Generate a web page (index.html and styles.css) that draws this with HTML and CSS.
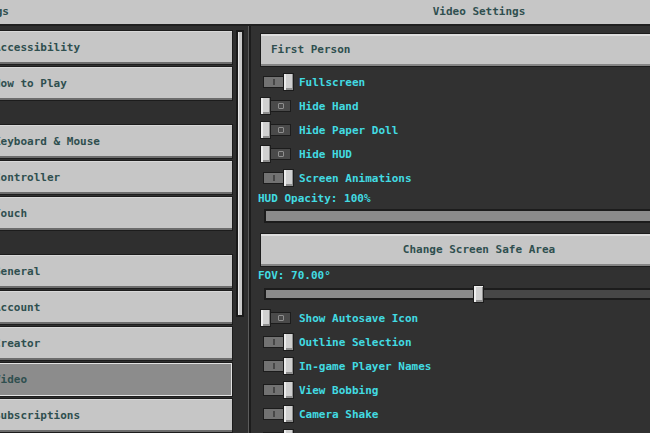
FILE: index.html
```html
<!DOCTYPE html>
<html lang="en">
<head>
    <meta charset="UTF-8">
    <meta name="viewport" content="width=device-width, initial-scale=1.0">
    <title>Video Settings</title>
    <link rel="stylesheet" href="styles.css">
</head>
<body>

    <div class="screen">
        <header class="topbar">
            <div class="topbar-left">Settings</div>
            <div class="topbar-right">Video Settings</div>
        </header>

        <div class="main">
            <nav class="sidebar">
                <div class="sidebar-list">
                    <div class="nav-group">
                        <div class="nav-button">Accessibility</div>
                        <div class="nav-button">How to Play</div>
                    </div>
                    <div class="nav-group">
                        <div class="nav-button">Keyboard &amp; Mouse</div>
                        <div class="nav-button">Controller</div>
                        <div class="nav-button">Touch</div>
                    </div>
                    <div class="nav-group">
                        <div class="nav-button">General</div>
                        <div class="nav-button">Account</div>
                        <div class="nav-button">Creator</div>
                        <div class="nav-button selected">Video</div>
                        <div class="nav-button">Subscriptions</div>
                    </div>
                </div>
                <div class="scrollbar"></div>
            </nav>

            <section class="content">
                <div class="mc-button">First Person</div>

                <div class="setting-list first">
                    <div class="setting">
                        <span class="toggle is-on"><span class="toggle-track"></span><span class="toggle-knob"></span></span>
                        <span class="setting-label">Fullscreen</span>
                    </div>
                    <div class="setting">
                        <span class="toggle"><span class="toggle-track"></span><span class="toggle-knob"></span></span>
                        <span class="setting-label">Hide Hand</span>
                    </div>
                    <div class="setting">
                        <span class="toggle"><span class="toggle-track"></span><span class="toggle-knob"></span></span>
                        <span class="setting-label">Hide Paper Doll</span>
                    </div>
                    <div class="setting">
                        <span class="toggle"><span class="toggle-track"></span><span class="toggle-knob"></span></span>
                        <span class="setting-label">Hide HUD</span>
                    </div>
                    <div class="setting">
                        <span class="toggle is-on"><span class="toggle-track"></span><span class="toggle-knob"></span></span>
                        <span class="setting-label">Screen Animations</span>
                    </div>
                </div>

                <div class="slider-label hud-label">HUD Opacity: 100%</div>
                <div class="slider hud-slider">
                    <div class="slider-fill" style="width: 100%;"></div>
                </div>

                <div class="mc-button centered">Change Screen Safe Area</div>

                <div class="slider-label fov-label">FOV: 70.00°</div>
                <div class="slider fov-slider">
                    <div class="slider-fill" style="width: 50%;"></div>
                    <span class="slider-thumb" style="left: 50%;"></span>
                </div>

                <div class="setting-list">
                    <div class="setting">
                        <span class="toggle"><span class="toggle-track"></span><span class="toggle-knob"></span></span>
                        <span class="setting-label">Show Autosave Icon</span>
                    </div>
                    <div class="setting">
                        <span class="toggle is-on"><span class="toggle-track"></span><span class="toggle-knob"></span></span>
                        <span class="setting-label">Outline Selection</span>
                    </div>
                    <div class="setting">
                        <span class="toggle is-on"><span class="toggle-track"></span><span class="toggle-knob"></span></span>
                        <span class="setting-label">In-game Player Names</span>
                    </div>
                    <div class="setting">
                        <span class="toggle is-on"><span class="toggle-track"></span><span class="toggle-knob"></span></span>
                        <span class="setting-label">View Bobbing</span>
                    </div>
                    <div class="setting">
                        <span class="toggle is-on"><span class="toggle-track"></span><span class="toggle-knob"></span></span>
                        <span class="setting-label">Camera Shake</span>
                    </div>
                    <div class="setting">
                        <span class="toggle is-on"><span class="toggle-track"></span><span class="toggle-knob"></span></span>
                        <span class="setting-label">Fancy Leaves</span>
                    </div>
                </div>
            </section>
        </div>
    </div>

</body>
</html>
```

FILE: styles.css
```css
html, body {
    margin: 0;
    height: 100%;
    overflow: hidden;
    background-color: #313131;
}

body {
    font-family: "DejaVu Sans Mono", "Liberation Mono", monospace;
    font-size: 11px;
    font-weight: bold;
    color: #2f4f4f;
}

.screen {
    width: 769px;
    margin-left: -60px;
    height: 433px;
    display: flex;
    flex-direction: column;
}

/* top title bar */
.topbar {
    display: flex;
    height: 24px;
    line-height: 24px;
    background-color: #c6c6c6;
    border-bottom: 2px solid #1f1f1f;
    flex: none;
}

.topbar-left {
    width: 309px;
    padding-left: 16px;
    box-sizing: border-box;
}

.topbar-right {
    flex: 1;
    text-align: center;
}

.main {
    display: flex;
    flex: 1;
    min-height: 0;
}

/* left navigation */
.sidebar {
    width: 308px;
    border-right: 1px solid #5c5c5c;
    display: flex;
    padding-top: 4px;
    background-color: #2f2f2f;
}

.sidebar-list {
    width: 293px;
    display: flex;
    flex-direction: column;
    gap: 23px;
}

.nav-group {
    display: flex;
    flex-direction: column;
    gap: 1px;
}

.nav-button {
    height: 35px;
    line-height: 34px;
    padding-left: 53px;
    box-sizing: border-box;
    background-color: #c6c6c6;
    border: 1px solid #1c1c1c;
    box-shadow: inset 0 -2px 0 #6c6c6c, inset 0 1px 0 #d8d8d8;
}

.nav-button.selected {
    background-color: #8c8c8c;
    box-shadow: inset 0 0 0 1px #e2e2e2;
    border-color: #1c1c1c;
}

.scrollbar {
    width: 4px;
    height: 283px;
    margin-left: 3px;
    background-color: #c9c9c9;
    border: 2px solid #1a1a1a;
    box-shadow: inset 1px 0 0 #e8e8e8;
}

/* right settings column */
.content {
    width: 460px;
    box-sizing: border-box;
    border-left: 2px solid #1c1c1c;
    padding: 7px 11px 0 9px;
    background-color: #313131;
}

.mc-button {
    height: 34px;
    line-height: 32px;
    padding-left: 10px;
    box-sizing: border-box;
    background-color: #c6c6c6;
    border: 1px solid #1c1c1c;
    box-shadow: inset 0 -2px 0 #858585, inset 0 2px 0 #dedede;
}

.mc-button.centered {
    margin-top: 10px;
    padding-left: 0;
    text-align: center;
}

.setting-list {
    margin-top: 6px;
}

.setting-list.first {
    margin-top: 3px;
}

.setting {
    height: 24px;
    display: flex;
    align-items: center;
}

.setting-label {
    margin-left: 4px;
    color: #42dbe2;
}

.toggle {
    position: relative;
    width: 35px;
    height: 18px;
    flex: none;
}

.toggle-track {
    position: absolute;
    top: 3px;
    left: 9px;
    width: 22px;
    height: 12px;
    box-sizing: border-box;
    background-color: #4a4a4a;
    border: 1px solid #1c1c1c;
}

.toggle-track::after {
    content: "";
    position: absolute;
    left: 8px;
    top: 2px;
    width: 4px;
    height: 4px;
    border: 1px solid #8e8e8e;
    border-radius: 1px;
}

.toggle-knob {
    position: absolute;
    top: 0;
    left: 0;
    width: 11px;
    height: 18px;
    box-sizing: border-box;
    background-color: #d0d0d0;
    border: 1px solid #1c1c1c;
    box-shadow: inset 2px 0 0 #ececec, inset -1px -2px 0 #8e8e8e;
}

.toggle.is-on .toggle-track {
    left: 3px;
    width: 21px;
    background-color: #727272;
}

.toggle.is-on .toggle-track::after {
    left: 9px;
    top: 2px;
    width: 2px;
    height: 6px;
    border: none;
    border-radius: 0;
    background-color: #474747;
}

.toggle.is-on .toggle-knob {
    left: 23px;
}

/* sliders */
.slider-label {
    line-height: 14px;
    color: #42dbe2;
    margin-left: -2px;
}

.hud-label {
    margin-top: 2px;
}

.fov-label {
    margin-top: 2px;
}

.slider {
    position: relative;
    margin: 0 4px;
    box-sizing: border-box;
    background-color: #474747;
    border: 2px solid #1c1c1c;
}

.hud-slider {
    margin-top: 3px;
    height: 14px;
}

.fov-slider {
    margin-top: 5px;
    height: 12px;
}

.slider-fill {
    height: 100%;
    background-color: #8b8b8b;
}

.slider-thumb {
    position: absolute;
    top: -5px;
    width: 11px;
    height: 18px;
    margin-left: -6px;
    box-sizing: border-box;
    background-color: #d0d0d0;
    border: 1px solid #1c1c1c;
    box-shadow: inset 2px 1px 0 #efefef, inset -1px -2px 0 #8e8e8e;
}
```
